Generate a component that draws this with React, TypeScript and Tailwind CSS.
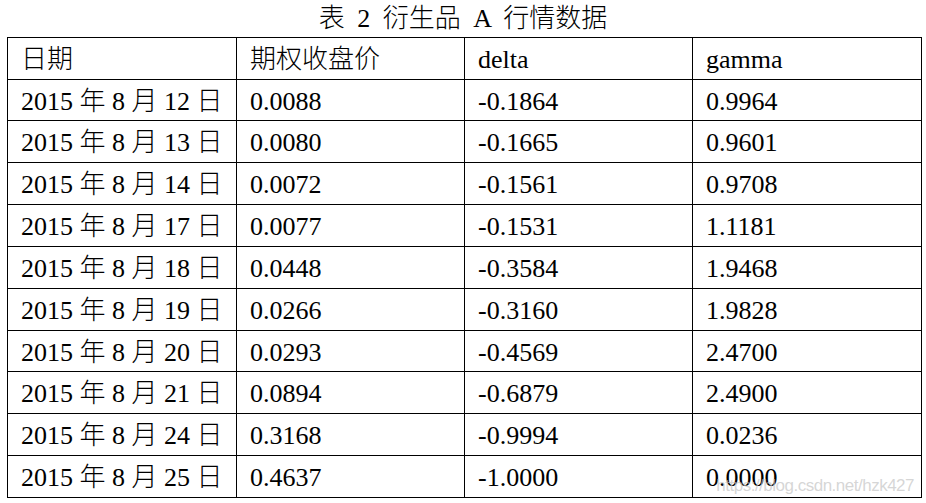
import React from "react";

const rows: [string, string, string, string][] = [
  ["2015 年 8 月 12 日", "0.0088", "-0.1864", "0.9964"],
  ["2015 年 8 月 13 日", "0.0080", "-0.1665", "0.9601"],
  ["2015 年 8 月 14 日", "0.0072", "-0.1561", "0.9708"],
  ["2015 年 8 月 17 日", "0.0077", "-0.1531", "1.1181"],
  ["2015 年 8 月 18 日", "0.0448", "-0.3584", "1.9468"],
  ["2015 年 8 月 19 日", "0.0266", "-0.3160", "1.9828"],
  ["2015 年 8 月 20 日", "0.0293", "-0.4569", "2.4700"],
  ["2015 年 8 月 21 日", "0.0894", "-0.6879", "2.4900"],
  ["2015 年 8 月 24 日", "0.3168", "-0.9994", "0.0236"],
  ["2015 年 8 月 25 日", "0.4637", "-1.0000", "0.0000"],
];

const header: [string, string, string, string] = ["日期", "期权收盘价", "delta", "gamma"];

const heights = ["h-[42px]", "h-[41px]", "h-[42px]", "h-[42px]", "h-[42px]", "h-[42px]", "h-[42px]", "h-[41px]", "h-[42px]", "h-[42px]", "h-[42px]"];

const font = { fontFamily: '"Liberation Serif", "Noto Sans CJK SC", serif' };

function Row({ cells, h }: { cells: [string, string, string, string]; h: string }) {
  return (
    <div className={`flex ${h}`}>
      <div className="w-[229px] border-r border-b border-black pl-[13px] pt-[7px] text-[26px] leading-[30px] whitespace-nowrap">{cells[0]}</div>
      <div className="w-[228px] border-r border-b border-black pl-[13px] pt-[7px] text-[26px] leading-[30px] whitespace-nowrap">{cells[1]}</div>
      <div className="w-[228px] border-r border-b border-black pl-[13px] pt-[7px] text-[26px] leading-[30px] whitespace-nowrap">{cells[2]}</div>
      <div className="w-[229px] border-r border-b border-black pl-[13px] pt-[7px] text-[26px] leading-[30px] whitespace-nowrap">{cells[3]}</div>
    </div>
  );
}

export default function App() {
  return (
    <div className="relative w-[926px] h-[503px] bg-white text-black font-light overflow-hidden" style={font}>
      <div className="h-[37px] pt-[4px] text-center text-[26px] leading-[30px] whitespace-nowrap [word-spacing:6px]">
        表 2 衍生品 A 行情数据
      </div>
      <div className="ml-[7px] w-[915px] border-t border-l border-black">
        <Row cells={header} h={heights[0]} />
        {rows.map((r, i) => (
          <Row key={i} cells={r} h={heights[i + 1]} />
        ))}
      </div>
      <div
        className="absolute top-[477px] right-[12px] text-[17px] leading-[17px] tracking-[-0.5px] text-[#c4c4c4]/70 whitespace-nowrap"
        style={{ fontFamily: '"Liberation Sans", Arial, sans-serif' }}
      >
        https://blog.csdn.net/hzk427
      </div>
    </div>
  );
}
